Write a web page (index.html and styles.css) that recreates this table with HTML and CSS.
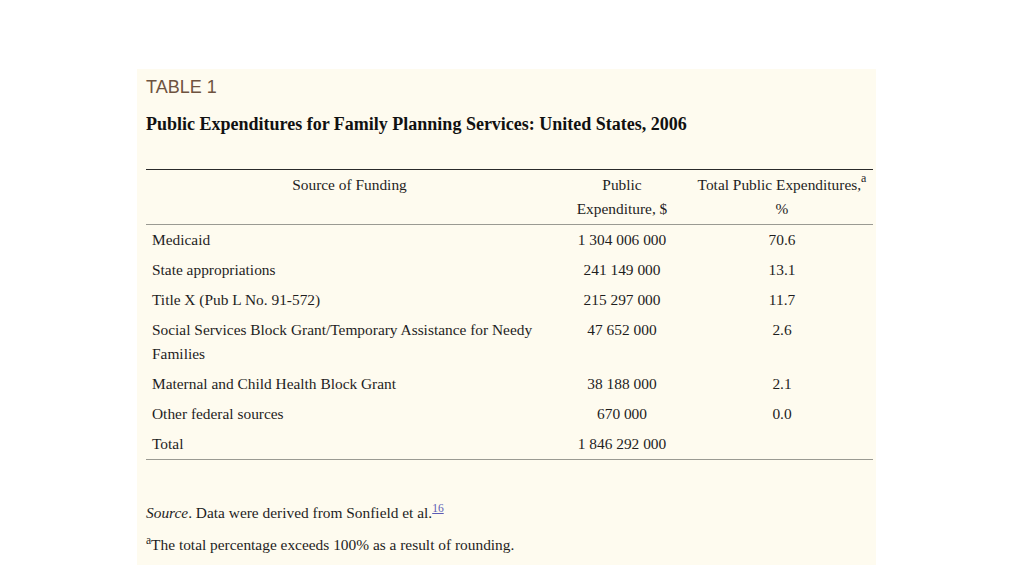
FILE: index.html
```html
<!DOCTYPE html>
<html>
<head>
<meta charset="utf-8">
<link rel="stylesheet" href="styles.css">
</head>
<body>
<div class="panel">
  <div class="label">TABLE 1</div>
  <h1 class="title">Public Expenditures for Family Planning Services: United States, 2006</h1>
  <table class="data">
    <colgroup>
      <col class="w1"><col class="w2"><col class="w3">
    </colgroup>
    <thead>
      <tr>
        <th>Source of Funding</th>
        <th>Public<br>Expenditure, $</th>
        <th>Total Public Expenditures,<sup>a</sup><br>%</th>
      </tr>
    </thead>
    <tbody>
      <tr><td class="c1">Medicaid</td><td class="c2">1 304 006 000</td><td class="c3">70.6</td></tr>
      <tr><td class="c1">State appropriations</td><td class="c2">241 149 000</td><td class="c3">13.1</td></tr>
      <tr><td class="c1">Title X (Pub L No. 91-572)</td><td class="c2">215 297 000</td><td class="c3">11.7</td></tr>
      <tr><td class="c1">Social Services Block Grant/Temporary Assistance for Needy Families</td><td class="c2">47 652 000</td><td class="c3">2.6</td></tr>
      <tr><td class="c1">Maternal and Child Health Block Grant</td><td class="c2">38 188 000</td><td class="c3">2.1</td></tr>
      <tr><td class="c1">Other federal sources</td><td class="c2">670 000</td><td class="c3">0.0</td></tr>
      <tr><td class="c1">Total</td><td class="c2">1 846 292 000</td><td class="c3"></td></tr>
    </tbody>
  </table>
  <div class="notes">
    <p class="note"><em>Source</em>. Data were derived from Sonfield et al.<sup><a class="ref" href="#">16</a></sup></p>
    <p class="note"><sup>a</sup>The total percentage exceeds 100% as a result of rounding.</p>
  </div>
</div>
</body>
</html>
```

FILE: styles.css
```css
html, body {
  margin: 0;
  padding: 0;
  background: #ffffff;
}
body {
  font-family: "Liberation Serif", "Times New Roman", serif;
  color: #1e1e1e;
}
.panel {
  margin: 69px 0 0 137px;
  width: 730px;
  height: 496px;
  padding: 0 0 0 9px;
  background: #fefbef;
}
.label {
  padding-top: 8px;
  font-family: "Liberation Sans", Arial, sans-serif;
  font-size: 18px;
  line-height: 20px;
  color: #6e5340;
}
.title {
  margin: 17px 0 0 0;
  font-size: 18px;
  line-height: 20px;
  font-weight: bold;
  color: #111;
}
.data {
  margin-top: 35px;
  width: 727px;
  table-layout: fixed;
  border-collapse: collapse;
  font-size: 15.4px;
  line-height: 24px;
  border-top: 1px solid #2a2a2a;
  border-bottom: 1px solid #9a9a92;
}
.w1 { width: 407px; }
.w2 { width: 138px; }
.w3 { width: 182px; }
.data th {
  font-weight: normal;
  text-align: center;
  vertical-align: top;
  padding: 3px 0;
  white-space: nowrap;
  border-bottom: 1px solid #9a9a92;
}
.data td {
  padding: 3px 6px;
  vertical-align: top;
}
.data td.c1 { text-align: left; }
.data td.c2, .data td.c3 { text-align: center; padding: 3px 0; }
.data sup {
  font-size: 12px;
  line-height: 0;
  vertical-align: 8px;
}
.notes {
  margin-top: 41px;
}
.note {
  margin: 0 0 8px 0;
  font-size: 15.4px;
  line-height: 24px;
}
.note sup {
  font-size: 11.5px;
  line-height: 0;
  vertical-align: 6px;
}
.ref {
  color: #5b5bb5;
  text-decoration: underline;
}
```
